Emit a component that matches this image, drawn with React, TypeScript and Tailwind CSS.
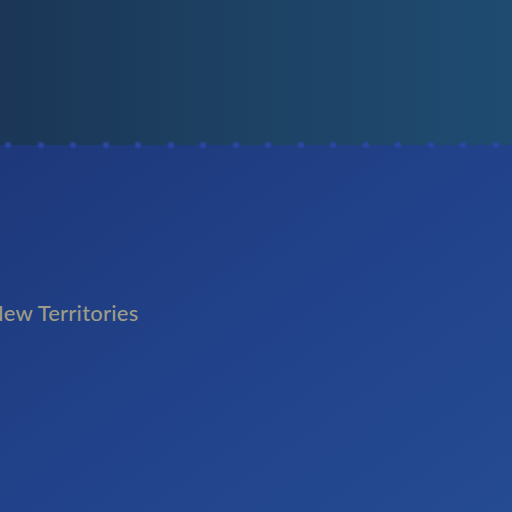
import React from "react";

export default function App() {
  const dots = Array.from({ length: 17 }, (_, i) => i);
  return (
    <div className="relative flex h-[512px] w-[512px] flex-col overflow-hidden" style={{ fontFamily: "Lato, 'Noto Sans', sans-serif" }}>
      <div className="h-[145px] w-full bg-gradient-to-r from-[#1b3656] via-[#1d4264] to-[#1f4b71]" />
      <div className="relative flex-1 bg-gradient-to-br from-[#1e387a] via-[#21428a] to-[#254b93]">
        <div className="absolute left-[5px] top-[-3px] flex gap-[26.5px]">
          {dots.map((i) => (
            <div key={i} className="h-[6px] w-[6px] rounded-full bg-[#2b49a6] blur-[1px]" />
          ))}
        </div>
        <div className="ml-[-13px] mt-[156px] text-[22px] font-medium leading-6 tracking-[0.2px] text-[#9c9c88]">New Territories</div>
      </div>
    </div>
  );
}
